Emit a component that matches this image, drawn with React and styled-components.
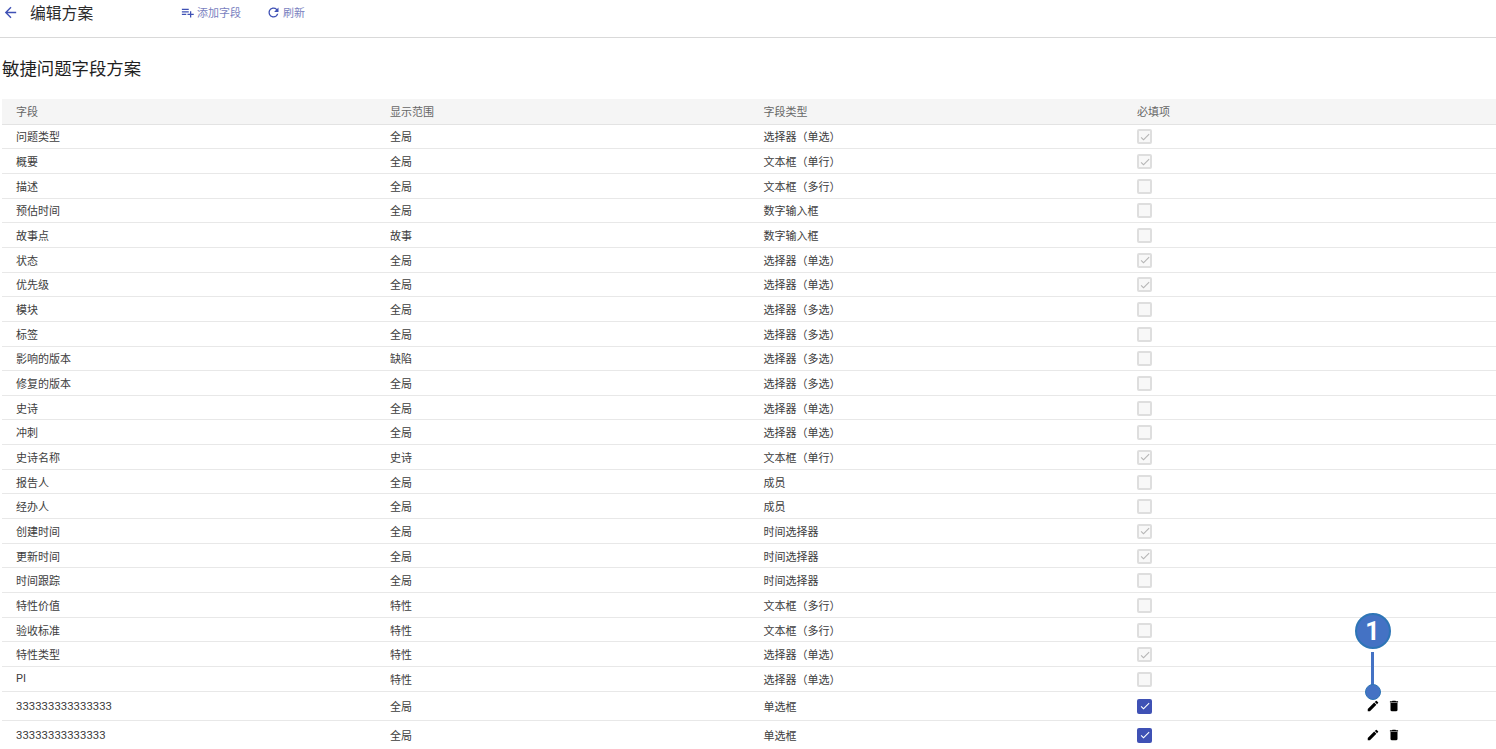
import React from 'react';
import styled, { createGlobalStyle } from 'styled-components';
import { MdArrowBack, MdPlaylistAdd, MdRefresh, MdEdit, MdDelete, MdCheck } from 'react-icons/md';

const fields = [
  ['问题类型', '全局', '选择器（单选）', true],
  ['概要', '全局', '文本框（单行）', true],
  ['描述', '全局', '文本框（多行）', false],
  ['预估时间', '全局', '数字输入框', false],
  ['故事点', '故事', '数字输入框', false],
  ['状态', '全局', '选择器（单选）', true],
  ['优先级', '全局', '选择器（单选）', true],
  ['模块', '全局', '选择器（多选）', false],
  ['标签', '全局', '选择器（多选）', false],
  ['影响的版本', '缺陷', '选择器（多选）', false],
  ['修复的版本', '全局', '选择器（多选）', false],
  ['史诗', '全局', '选择器（单选）', false],
  ['冲刺', '全局', '选择器（单选）', false],
  ['史诗名称', '史诗', '文本框（单行）', true],
  ['报告人', '全局', '成员', false],
  ['经办人', '全局', '成员', false],
  ['创建时间', '全局', '时间选择器', true],
  ['更新时间', '全局', '时间选择器', true],
  ['时间跟踪', '全局', '时间选择器', false],
  ['特性价值', '特性', '文本框（多行）', false],
  ['验收标准', '特性', '文本框（多行）', false],
  ['特性类型', '特性', '选择器（单选）', true],
  ['PI', '特性', '选择器（单选）', false],
];

const customFields = [
  ['333333333333333', '全局', '单选框'],
  ['33333333333333', '全局', '单选框'],
];

function App() {
  return (
    <Page>
      <GlobalStyle />
      <Header>
        <BackIcon />
        <HeaderTitle>编辑方案</HeaderTitle>
        <Toolbar>
          <ToolButton>
            <MdPlaylistAdd />
            添加字段
          </ToolButton>
          <ToolButton>
            <MdRefresh />
            刷新
          </ToolButton>
        </Toolbar>
      </Header>
      <SchemeTitle>敏捷问题字段方案</SchemeTitle>
      <Table>
        <HeadRow>
          <Cell>字段</Cell>
          <Cell>显示范围</Cell>
          <Cell>字段类型</Cell>
          <Cell>必填项</Cell>
        </HeadRow>
        {fields.map(([name, scope, type, required]) => (
          <Row key={name}>
            <Cell>{name}</Cell>
            <Cell>{scope}</Cell>
            <Cell>{type}</Cell>
            <Cell>
              <Checkbox>{required && <MdCheck />}</Checkbox>
            </Cell>
          </Row>
        ))}
        {customFields.map(([name, scope, type]) => (
          <Row key={name} $tall>
            <Cell $digits>{name}</Cell>
            <Cell>{scope}</Cell>
            <Cell>{type}</Cell>
            <Cell>
              <Checkbox $active>
                <MdCheck />
              </Checkbox>
            </Cell>
            <Actions>
              <MdEdit />
              <MdDelete />
            </Actions>
          </Row>
        ))}
      </Table>
      <Callout>
        <CalloutBadge>1</CalloutBadge>
        <CalloutLine />
        <CalloutDot />
      </Callout>
    </Page>
  );
}

export default App;

const GlobalStyle = createGlobalStyle`
  html, body {
    margin: 0;
    height: 749px;
    overflow: hidden;
    background: #fff;
  }
  body {
    font-family: Roboto, "Noto Sans CJK SC", sans-serif;
    color: #3d3d3d;
  }
`;
const Page = styled.div`
  position: relative;
  height: 749px;
  overflow: hidden;
`;
const Header = styled.div`
  display: flex;
  align-items: center;
  height: 24px;
  padding: 0 0 13px 2px;
  border-bottom: 1px solid #d9d9d9;
`;
const BackIcon = styled(MdArrowBack)`
  width: 17px;
  height: 17px;
  color: #3f51b5;
`;
const HeaderTitle = styled.div`
  margin-left: 11px;
  width: 150px;
  font-size: 15.8px;
  color: #2b2b2b;
`;
const Toolbar = styled.div`
  display: flex;
  align-items: center;
  gap: 25px;
`;
const ToolButton = styled.div`
  display: flex;
  align-items: center;
  gap: 2px;
  font-size: 11px;
  color: #7a7fc0;

  svg {
    width: 15px;
    height: 15px;
    color: #3f51b5;
  }
`;
const SchemeTitle = styled.div`
  margin: 18px 0 0 2px;
  height: 25px;
  line-height: 26px;
  font-size: 17.4px;
  color: #1f1f1f;
`;
const Table = styled.div`
  margin: 18px 0 0 2px;
  font-size: 11px;
`;
const HeadRow = styled.div`
  display: grid;
  grid-template-columns: 374px 373.5px 373.5px 1fr;
  align-items: center;
  height: 25.6px;
  padding-left: 14px;
  background: #f5f5f5;
  border-bottom: 1px solid #e3e3e3;
  box-sizing: border-box;
  color: #666;
`;
const Row = styled.div`
  position: relative;
  display: grid;
  grid-template-columns: 374px 373.5px 373.5px 1fr;
  align-items: center;
  height: ${(p) => (p.$tall ? '29px' : '24.67px')};
  padding-left: 14px;
  border-bottom: 1px solid #e8e8e8;
  box-sizing: border-box;
`;
const Cell = styled.div`
  display: flex;
  align-items: center;
  white-space: nowrap;
  font-size: ${(p) => (p.$digits ? '11.4px' : 'inherit')};
`;
const Checkbox = styled.div`
  display: flex;
  align-items: center;
  justify-content: center;
  width: 15px;
  height: 15px;
  margin-top: 1px;
  box-sizing: border-box;
  border-radius: 2px;
  border: ${(p) => (p.$active ? 'none' : '2px solid #dedede')};
  background: ${(p) => (p.$active ? '#3f51b5' : '#f8f8f8')};
  color: ${(p) => (p.$active ? '#fff' : '#b5b5b5')};

  svg {
    flex: none;
    width: 12px;
    height: 12px;
  }
`;
const Actions = styled.div`
  position: absolute;
  left: 1364px;
  top: 50%;
  transform: translateY(-50%);
  display: flex;
  gap: 7px;
  color: #000;

  svg {
    width: 14px;
    height: 14px;
  }
`;
const Callout = styled.div`
  position: absolute;
  left: 1354px;
  top: 613px;
  width: 37px;
  display: flex;
  flex-direction: column;
  align-items: center;
`;
const CalloutBadge = styled.div`
  display: flex;
  align-items: center;
  justify-content: center;
  width: 36px;
  height: 36px;
  box-sizing: border-box;
  border-radius: 50%;
  background: #4472c4;
  border: 2px solid #2e75b6;
  color: #fff;
  font-family: Roboto, sans-serif;
  font-size: 25px;
  font-weight: 700;
`;
const CalloutLine = styled.div`
  width: 3px;
  height: 33px;
  margin-top: 3px;
  background: #4472c4;
`;
const CalloutDot = styled.div`
  width: 16px;
  height: 16px;
  margin-top: -1px;
  box-sizing: border-box;
  border-radius: 50%;
  background: #4472c4;
  border: 1px solid #2e75b6;
`;
